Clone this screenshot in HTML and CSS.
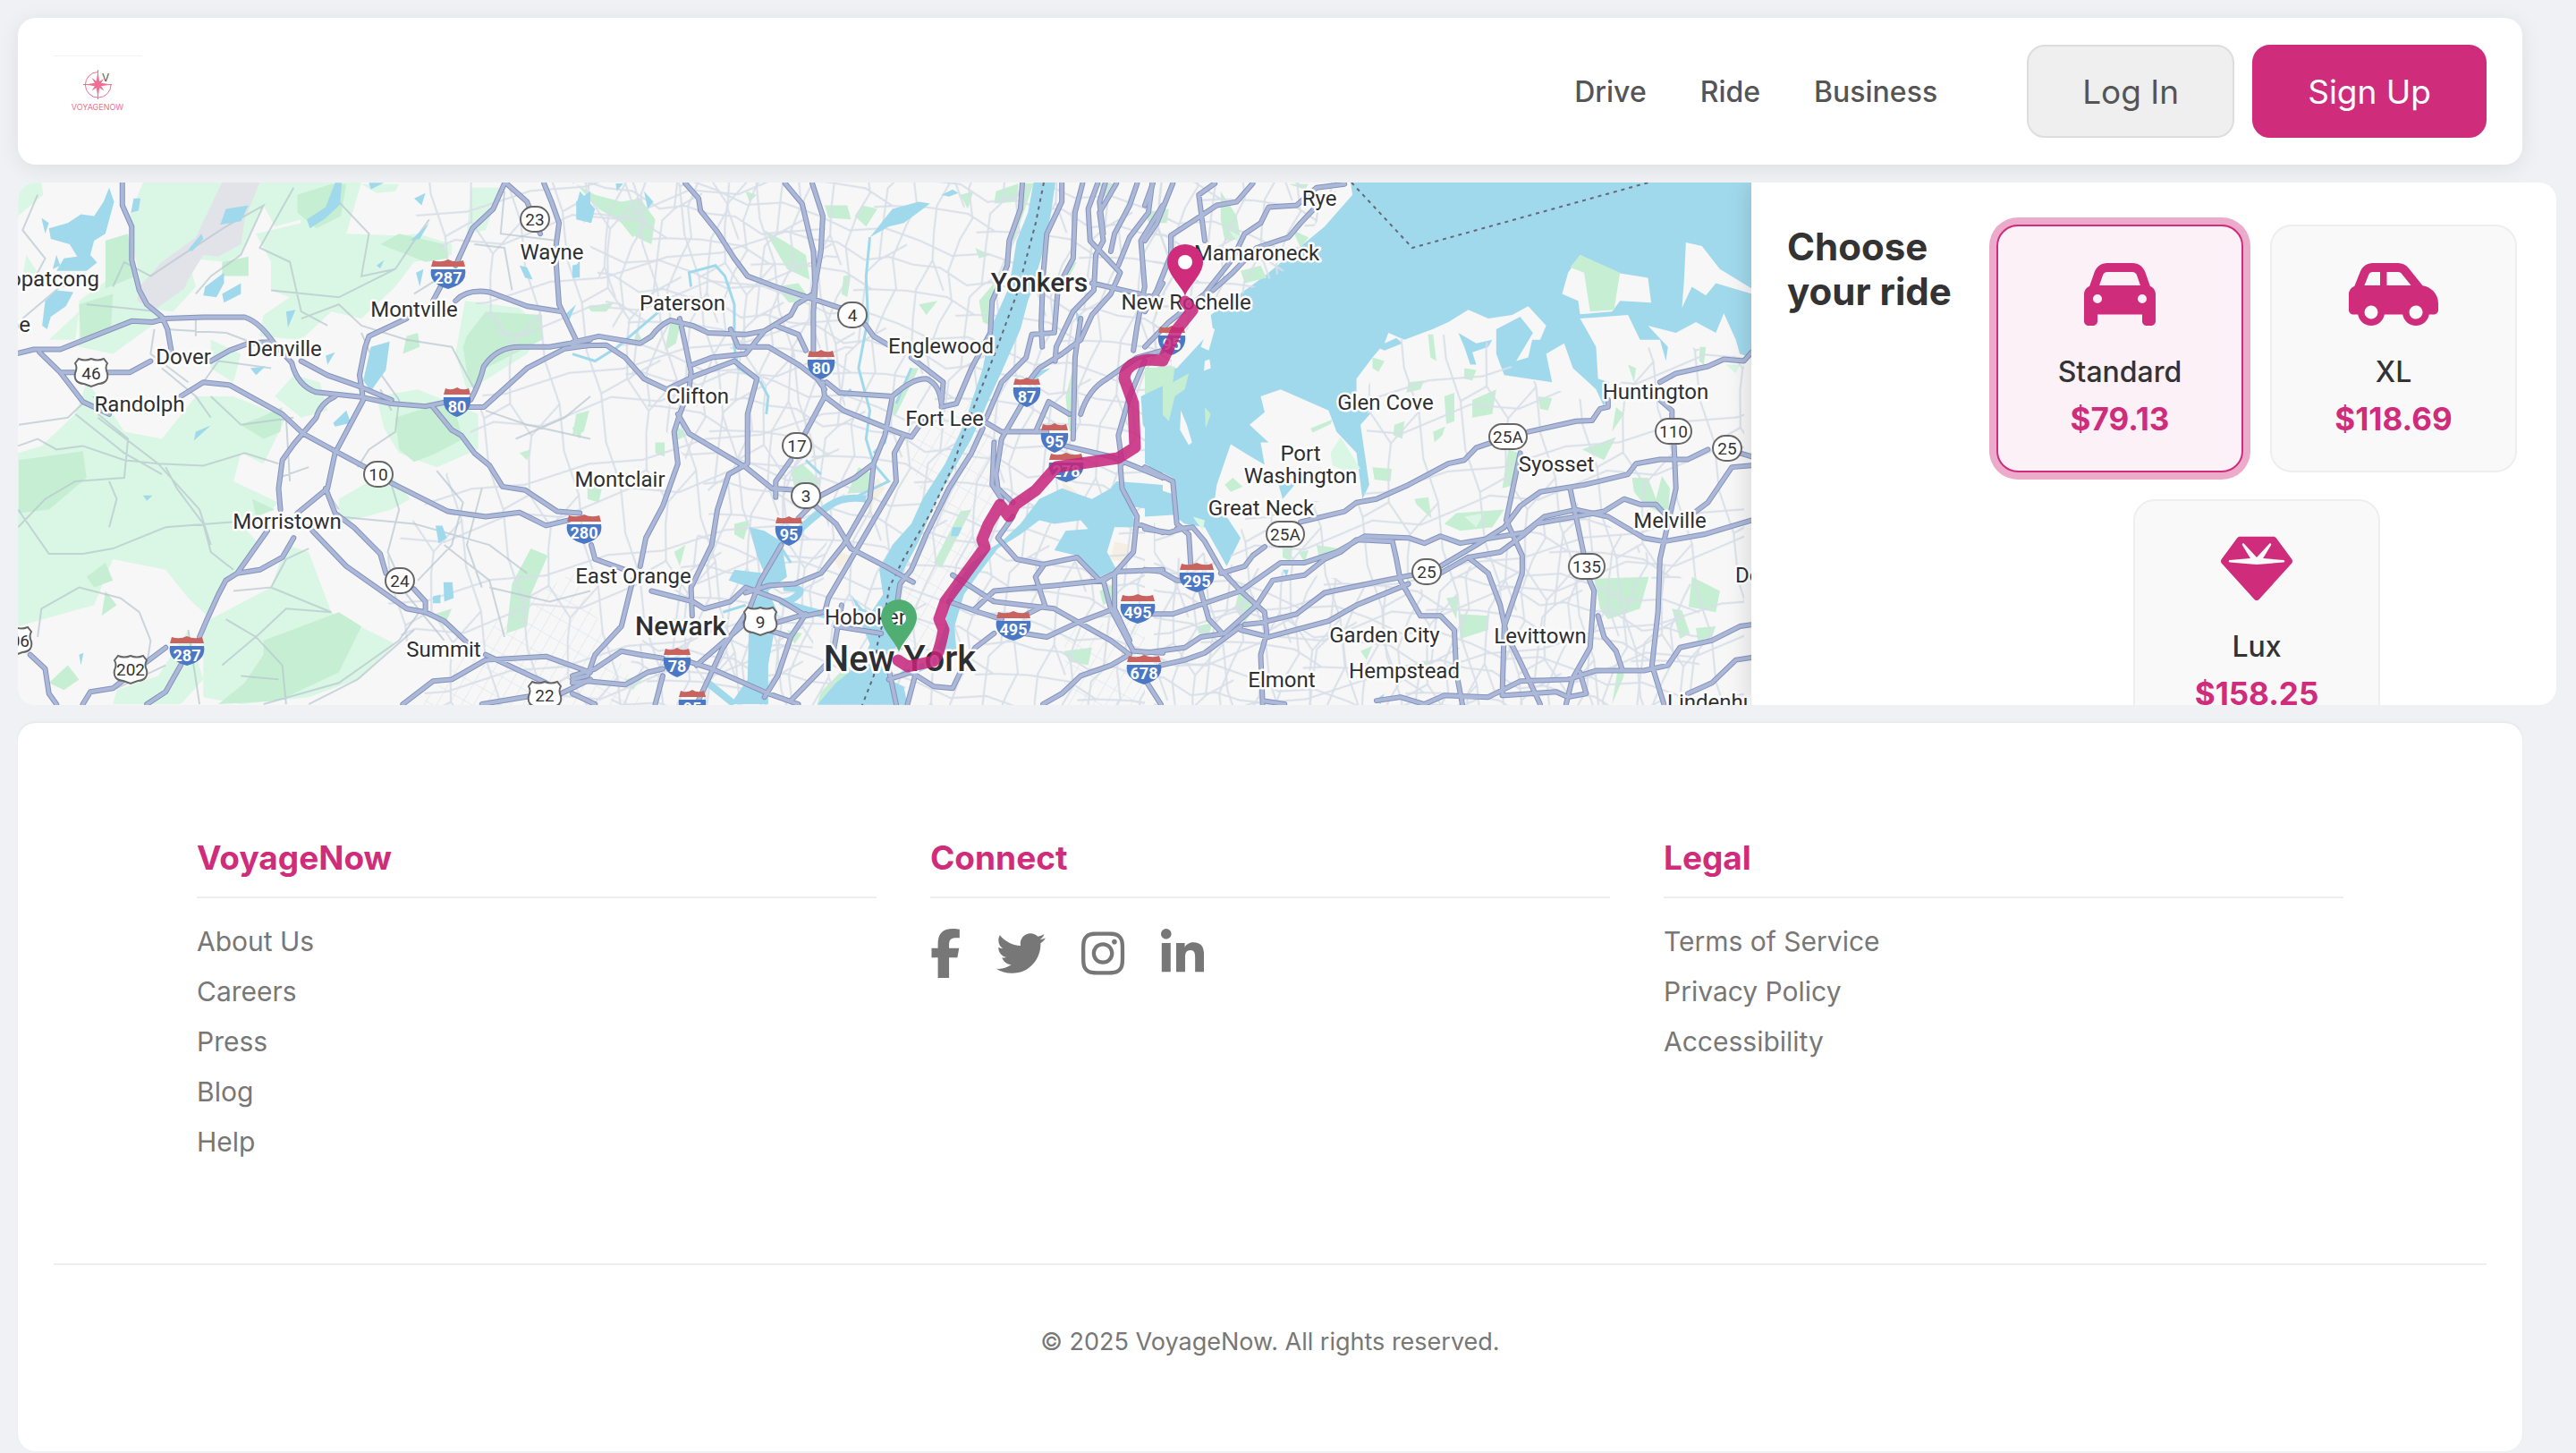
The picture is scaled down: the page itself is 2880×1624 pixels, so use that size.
FILE: index.html
```html
<!DOCTYPE html>
<html lang="en">
<head>
<meta charset="utf-8">
<title>VoyageNow</title>
<meta name="viewport" content="width=device-width, initial-scale=1">
<link rel="stylesheet" href="styles.css">
</head>
<body>
<header class="header">
  <a class="logo" href="#" aria-label="VoyageNow home">
    <svg class="logo-mark" viewBox="0 0 100 80" width="100" height="80">
      <path class="logo-rule" d="M0 .5H99"/>
      <g class="logo-lines">
        <path d="M49.500 18.500A14.300 14.300 0 1 0 64 32.500"/>
        <path d="M49.500 16V49M33 32.500H65"/>
      </g>
      <path class="logo-star" d="M49.500 17L51.200 30.500 64.500 32.500 51.500 34.500 49.500 47 47.500 34.500 35 32.500 47.500 30.500ZM42.500 25L49.500 30 56 26 52 32.500 56.500 39.500 49.500 35 42.500 39.500 47 32.500Z"/>
      <text class="logo-v" x="54" y="29">V</text>
      <text class="logo-name" x="49" y="61">VOYAGENOW</text>
    </svg>
  </a>
  <nav class="nav">
    <a class="nav-link" href="#">Drive</a>
    <a class="nav-link" href="#">Ride</a>
    <a class="nav-link" href="#">Business</a>
  </nav>
  <div class="actions">
    <button class="btn btn-plain" type="button">Log In</button>
    <button class="btn btn-primary" type="button">Sign Up</button>
  </div>
</header>

<main class="booking">
  <div class="map">
    <svg class="map-svg" viewBox="20 204 1938 584" preserveAspectRatio="xMinYMin slice" role="img" aria-label="Route from New York to New Rochelle">
      <defs>
        <pattern id="mesh" width="118" height="96" patternUnits="userSpaceOnUse" patternTransform="rotate(14)">
          <path class="street" d="M0 12L40 20 78 8 118 12M0 40L30 36 64 48 90 38 118 40M0 70L46 66 80 78 118 70M14 0L20 30 10 66 14 96M44 0L40 38 52 70 44 96M74 0L80 44 70 60 74 96M100 0L94 38 106 70 100 96M20 30L40 60M80 44L106 20M60 84L80 78"/>
        </pattern>
        <pattern id="mesh2" width="134" height="104" patternUnits="userSpaceOnUse" patternTransform="rotate(-12)">
          <path class="street" d="M0 20L60 28 134 20M0 64L40 56 92 72 134 64M24 0L30 50 24 104M70 0L62 40 78 80 70 104M110 0L116 52 110 104M30 50L62 40M78 80L116 52"/>
        </pattern>
        <pattern id="grid" width="12" height="22" patternUnits="userSpaceOnUse" patternTransform="rotate(30)">
          <path class="street thin" d="M0 0V22M0 0H12"/>
        </pattern>
        <path id="island" d="M0 980L70 975 100 1000 150 1010 205 1120 240 1040 175 930 180 890 215 775 250 800 325 850 345 930 375 890 300 835 290 770 310 770 262 720 300 685 290 640 340 620 400 650 460 680 480 740 530 800 545 930 562 890 540 720 572 680 530 640 530 590 570 530 600 490 610 460 650 480 720 450 760 430 810 395 860 420 920 410 960 385 1005 440 990 480 970 480 960 530 930 540 972 460 940 415 880 450 880 520 900 580 960 590 1020 600 1005 520 1050 490 1072 560 1130 620 1150 670 1162 600 1135 590 1130 500 1090 420 1210 410 1240 480 1290 480 1305 540 1310 500 1260 440 1330 460 1380 430 1430 460 1450 405 1480 480 1490 520 1520 530V1515H0Z"/>
        <symbol id="i2" viewBox="0 0 32 34"><path class="i-blue" d="M1 11H31Q33 27 16 33 -1 27 1 11Z"/><path class="i-red" d="M3 1Q10 4 16 0 22 4 29 1L31 8H1Z"/></symbol>
        <symbol id="i3" viewBox="0 0 40 34"><path class="i-blue" d="M1 11H39Q42 27 20 33 -2 27 1 11Z"/><path class="i-red" d="M3 1Q12 4 20 0 28 4 37 1L39 8H1Z"/></symbol>
        <symbol id="us" viewBox="0 0 44 36"><path class="badge" d="M8 3Q15 6 22 3 29 6 36 3L40 8Q37 13 40 19 42 30 30 31L22 34 14 31Q2 30 4 19 7 13 4 8Z"/></symbol>
        <g id="roads">
          <g transform="translate(0 190) scale(.4209 .3954)">
            <path class="vs" d="M48 518L90 507H160L350 427 405 430 440 420 540 416H650Q690 430 728 490L775 545Q790 610 840 628L960 642 1040 660 1130 668 1190 655 1250 650Q1275 600 1285 555 1320 500 1380 500H1460L1568 480M325 35V100L350 160V255L370 340 390 380 430 415 445 450 455 510M105 515L160 572 220 655 290 690M160 572H345L400 540M560 540L610 510 660 490 720 485M480 640L540 600 610 608 750 690 805 745 900 800 970 840M1040 885L1190 965 1290 980 1380 968 1450 1005 1510 990M1340 38L1310 110 1255 165 1210 270M1170 330L1150 370M1080 420L980 470 970 500 955 580 965 650 890 800 870 900 790 970M780 1040L750 1095 690 1130 630 1140 600 1160 580 1200 550 1270 530 1320M480 1400L440 1475 390 1510M1345 38L1400 90 1435 180M1445 38L1465 90 1485 150 1475 230 1485 380 1530 480M1210 370Q1240 335 1300 345L1400 385 1490 400M865 900L890 970 940 1010 1010 1085 1025 1140M1100 1185L1130 1220V1250L1180 1275 1240 1335M890 640Q850 660 840 700L780 775 750 820 740 900 745 960M710 1020L630 1140M830 1020L920 1120 1080 1240 1130 1250M1150 670L1200 735 1225 750 1260 800 1300 835 1335 895 1395 905 1480 965 1540 970M1190 670H1285L1400 560 1500 505 1568 495M1070 1510L1150 1445 1200 1440 1290 1385 1450 1375 1568 1420M1280 1510L1420 1485M1490 1480L1568 1440M1290 1370L1450 1450M80 1370L120 1410 130 1480 150 1510M220 1510L240 1475 300 1465 330 1440M390 1390L440 1350M800 540L870 580 950 610 1040 650"/>
          </g>
          <g transform="translate(640 190) scale(.4209 .3954)">
            <path class="vs" d="M300 38L335 80 340 115 385 175 430 250 465 300 540 330 640 365 740 400 780 440 800 470 840 495M900 530L985 600 980 660M565 38L610 95 640 230 645 330 640 400V510M637 38L665 130 660 230 640 350 595 380 580 410 510 455 460 465 360 460 320 440 260 425Q230 440 210 470L180 490 70 470 0 487M510 455L460 520 370 530 320 550M0 497L90 495 140 530 190 590 250 620 330 580 430 540M420 450L440 500 520 500 600 550 650 590 670 620M540 440L600 465 620 510M285 420L315 570 310 620 285 690 270 740 280 830 240 950 195 1040 180 1120M430 540L490 590 465 690V830L415 860 385 960 370 1060 315 1180 318 1260M280 690L310 745 460 840 530 900 590 905M670 640L615 750M580 820L540 880V925M675 600L710 630 850 640Q900 590 940 590 975 605 980 660M665 600L670 640 720 680 860 740 900 755 930 710M850 640L830 750 800 830 750 870 660 920 600 985M800 830L790 930 720 1060 660 1140 590 1170 520 1175 460 1195M880 750L855 800 860 880 800 990 740 1100 680 1210 670 1250M640 945L700 1000 740 1070 830 1120 905 1165M555 1060L500 1160 470 1240 400 1350 330 1510M50 1060L60 1100 140 1130M210 1190L320 1220 350 1240 420 1220 460 1180 550 1215 620 1260 665 1250M160 1160L130 1290 60 1370 40 1430 0 1440M0 1430L60 1410 130 1360 180 1370 240 1380M310 1390L370 1410 520 1480 600 1510M0 1450L40 1445 140 1455 200 1420 240 1410M460 1280L330 1400M540 1280L620 1255M520 1300L580 1320 620 1255M580 1320L545 1430 510 1490M0 1480L60 1510M240 1430L220 1510M715 1230L690 1380 580 1500M700 1290L820 1310M1195 38L1190 110 1160 200 1155 270 1115 370 1110 460 1060 560 1020 660 980 670M1300 38V90L1260 180 1250 300 1245 440 1248 500M1355 38L1335 120 1330 250 1290 330 1280 460 1220 465 1205 530 1140 600 1100 700M1395 38L1370 110 1375 200 1455 290 1430 350 1380 410 1350 480 1300 520 1240 560 1210 600M1445 38L1400 120 1410 200 1390 240 1385 340 1330 400 1285 500 1282 540M1500 38L1480 100 1440 180 1430 230M1415 38L1400 90 1410 180M1380 320L1568 365M1568 100L1510 200 1520 330 1500 440 1490 510M1540 38L1530 120 1480 190 1450 270M1100 715L1140 740 1260 740M1310 780L1430 810 1568 870M1200 650L1140 760 1125 860 1130 900 1170 940M1120 770L1115 890 1140 930M1330 760L1335 530 1350 420M1350 690Q1370 620 1420 590L1500 530 1568 510M1230 740L1265 655 1320 690M1090 730L1060 800 1000 900 940 1030 900 1130 870 1170 860 1240M1460 830L1450 750 1480 640 1520 540M1455 830L1460 900 1500 980 1490 1080 1440 1140 1400 1160 1340 1095 1250 1115 1180 1100 1130 1040 1170 980M1500 1000L1568 1025M1010 1145L1120 1220 1280 1240 1430 1330 1480 1370M1070 1240L1120 1190 1280 1175 1410 1160 1450 1135 1568 1130M1250 1120L1230 1150 1255 1230 1200 1260M1410 1160L1430 1240 1490 1360 1568 1365M1440 1140V1240L1480 1330M1440 1240L1340 1280 1260 1320 1200 1310M1000 1220L1080 1250 1140 1270M1480 1370L1430 1400 1350 1430 1300 1480 1250 1510M840 1440L900 1420 960 1460 1010 1465 1030 1420 1070 1350 1120 1310M840 1410L860 1510M890 1510L910 1430"/>
          </g>
          <g transform="translate(1280 190) scale(.4464 .3954)">
            <path class="vs" d="M390 995L500 965 530 940 580 930 660 890 760 830 800 820 830 785 870 770M960 740L1080 710 1120 708 1140 675 1160 670V650M1290 600L1330 575 1410 555 1450 535 1500 540 1520 515M300 1065L270 1090 250 1120 190 1140M1290 650L1320 680V700M1325 770L1330 900 1290 1100 1285 1250 1270 1400 1300 1510M740 1120L830 1060 900 1010 940 950 990 910 1100 890 1210 860 1230 830 1290 818H1360L1410 790M1490 800L1520 810M670 1145L600 1160 450 1195 380 1255 290 1280 250 1285M0 1255H70L240 1190 340 1110 400 1110 480 1080 550 1035 660 1040 700 1055 740 1035 790 1055 950 1025 1000 980 1080 960 1160 980 1250 1040 1300 1050 1400 1030 1520 990M0 1365L100 1350 140 1320 200 1310 280 1230 320 1160 400 1145 450 1100 490 1080 530 1045 620 1050 630 1100 640 1160 660 1200 690 1260 740 1260 775 1300 780 1420 795 1510M740 1140L810 1095 890 1080 950 1030 980 1000 1150 965 1200 930 1240 945 1280 945 1300 970M1380 965L1410 940 1440 890 1470 840 1520 835M905 990L940 800M905 990L945 1090V1140L900 1290 895 1485M810 1095L860 1140 890 1230 905 1310 940 1390 990 1510M1065 900L1100 1090M1110 1150L1125 1190 1115 1350 1070 1440 1055 1510M1135 1260L1150 1320 1180 1360 1195 1410M580 1500L640 1490 700 1510 750 1485 860 1490 940 1445 1060 1440 1130 1415 1250 1415 1310 1400 1340 1350 1420 1330 1490 1290 1520 1285M900 1485L1030 1475 1060 1490 1105 1480 1090 1420M1360 1480L1420 1450 1480 1385 1520 1378M0 840L70 880 80 1000 110 1030 115 1120M140 1190L160 1270 190 1305M80 1015L120 1010 150 1050 190 1130 240 1190 300 1250 305 1310 290 1370 295 1510M0 1130L40 1135 80 1160H120M0 1015L60 1025 90 1015M240 1300L310 1320 460 1275 530 1230 660 1170M40 1400L100 1385 150 1365 240 1290M295 1500L350 1510M175 38L135 70 150 200M270 38L230 90 180 100 120 145 65 185V240L30 340 0 400M500 40L430 50 380 100 310 105 290 150 250 180 220 250 150 350 60 430 0 500M440 90L390 150 360 190 280 220 220 290 170 340M20 38L0 100M70 38L30 150 0 200M45 320L30 350M0 1440L40 1510"/>
          </g>
        </g>
      </defs>

      <rect class="land" x="20" y="204" width="1938" height="584"/>

      <!-- parks: New Jersey -->
      <g transform="translate(0 190) scale(.4209 .3954)">
        <path class="park" d="M48 35H110L115 70 48 130ZM380 35H780L800 140 730 160 700 100 640 240 600 260 500 250 520 330 460 400 380 390 370 300 350 200 340 140ZM780 35H960L920 180 1060 185 1110 180 1200 210 1200 240 1100 260 1050 330 960 420 880 400 800 480 690 470 700 410 770 360 720 340 720 260 680 180 800 150ZM210 370L300 300 340 200 360 330 390 390 430 420 300 520 210 500ZM1235 370L1380 390 1440 450 1400 520 1280 600 1240 620 1210 520ZM900 930L1030 850 1090 930 1040 960 900 1000ZM1250 50H1330L1290 170 1240 180ZM48 800L110 780 200 690 230 600 300 690 330 740 430 760 520 640 620 640 760 700 700 830 640 800 620 880 740 940 720 960 640 1000 690 1060 640 1140 590 1170 550 1260 500 1210 440 1130 300 1100 250 1230 48 1290ZM540 1280L720 1180 760 1060 820 1080 880 1250 1050 1340 950 1440 820 1490 640 1510 540 1490ZM100 290L60 300 70 240ZM1000 640L1110 620 1270 690 1270 790 1160 840 1060 800 1020 730ZM130 480L210 400 200 480ZM420 1430L500 1300 540 1440 480 1510H300L310 1470ZM560 480L640 520 620 600 560 560ZM780 580L850 600 870 680 800 700 730 640ZM960 40H1060L1050 60 1000 65Z"/>
        <path class="park-deep" d="M790 70L880 40H920L905 130 840 165 790 120ZM280 200L340 180 360 300 280 335ZM210 380L300 350 295 440 215 490ZM1240 470L1290 400 1440 410V480L1290 560 1260 620 1240 570 1230 500ZM1050 700L1200 650 1230 760 1160 800 1100 825 1060 790ZM1360 1170L1410 1070 1455 1090 1410 1200 1400 1290 1345 1310ZM700 1330L900 1250 960 1290 900 1420 740 1500 580 1510 650 1450 700 1370ZM50 820L220 795 230 870 130 960 50 970ZM690 700L750 670 745 740 700 760 640 720ZM590 260L660 245 660 300 590 300ZM670 930L730 960 680 980ZM1010 210L1060 180 1180 210 1190 250 1130 260ZM230 1150L280 1110 300 1160 250 1180ZM130 1450L180 1400 210 1440 170 1470ZM1080 470L1110 460 1115 500 1070 520ZM1520 730L1560 680 1540 760ZM280 1190L310 1230 270 1260ZM1380 800L1410 790 1400 820ZM1140 1260L1200 1240 1180 1290Z"/>
        <path class="airfield" d="M590 35H690L650 140 640 210 580 245 540 240 500 310 490 335 410 395 365 370 370 330 430 260 520 190Z"/>
      </g>

      <!-- parks: Bergen, Hudson and the city -->
      <g transform="translate(640 190) scale(.4209 .3954)">
        <path class="park-deep" d="M10 40L60 70 130 90 180 80 220 140 210 210 170 190 130 150 70 110ZM510 170L560 200 620 240 630 310 570 280ZM540 330L600 320 635 370 575 375ZM670 100H730L740 140 680 135ZM770 100L810 110 780 160 750 130ZM260 430L290 420 275 490 245 510ZM580 850L610 830 660 880 640 910 590 900ZM760 840L800 860 790 910 730 915ZM1160 200L1200 38H1225L1170 210ZM1080 370L1120 320 1110 440 1090 430ZM1030 965L1060 960 980 1125 960 1110ZM900 560H920L860 690H840ZM275 720L305 750 275 765ZM430 1000L470 990 455 1045 430 1030ZM660 1475L730 1400 760 1430 710 1510H650ZM720 300L740 295 730 360 715 350ZM40 385L110 375 90 400 50 400ZM920 380L970 370 940 410ZM1125 60L1185 38 1180 90 1120 95ZM1520 590L1568 545V640L1540 660ZM1330 560L1335 730 1320 740 1310 640ZM1400 1190L1440 1170V1210L1410 1230ZM1305 1360L1380 1350 1370 1400 1320 1390ZM10 690L45 680 30 740 0 750ZM40 890L80 890 70 940 40 930ZM270 1080L300 1060 285 1120ZM1310 270L1340 260 1310 320ZM1070 220L1110 240 1080 250ZM1400 38H1440L1410 80ZM130 150L190 160 160 190ZM140 1440L200 1420 160 1470ZM570 1300L610 1310 590 1340ZM460 60L490 70 470 90ZM1030 70L1065 60 1050 110ZM220 770L245 770V810L220 800ZM170 450L190 490 165 480Z"/>
        <path class="sand" d="M810 870L830 900 800 940 790 990 780 920ZM710 1080L740 1090 710 1130 695 1100ZM1300 880L1340 910 1330 950 1310 930ZM1440 1050L1480 1060 1470 1110 1430 1100Z"/>
      </g>

      <path class="mesh2" d="M440 204H900L960 340 900 788H480L420 640 520 500 560 380Z"/>
      <path class="mesh" d="M640 204H1310V788H680L800 560 700 420Z"/>
      <path class="grid" d="M1015 500L1100 420 1128 500 1110 580 1060 660 1050 720 1010 740 1000 670 1040 590Z"/>
      <path class="grid" d="M470 788L560 690 640 640 720 788ZM1190 700L1330 690 1390 788H1190Z"/>

      <g class="lanes" transform="translate(0 190) scale(.4209 .3954)">
        <path class="vs" d="M48 780L100 760 150 790 220 780 330 820 420 830 540 836 650 800 740 830M48 1010L120 930 200 880 330 870 340 760 260 690M48 960L130 1085H220L300 1070 440 1010 620 995M100 1320L110 1240 210 1180 320 1210 370 1250 400 1330 390 1400M300 1470L440 1400M50 720L180 700 220 660M260 700L420 830 530 960 560 1060M440 840L470 900 540 1000 560 1080 620 1130M100 70L60 170 120 250 80 330M230 380L330 390 420 400M300 330L330 260 400 300 470 250 600 160 700 100 640 240 560 300 520 350M780 50L690 220 770 260 800 400 870 440M800 420L900 380 960 440 1080 480 1200 500 1260 620M720 340L900 360 1050 280 1100 200 1140 140M900 90L980 180 960 300 1050 280M620 1190L720 1180 880 1250 760 1240 690 1310 590 1400M720 1180L760 1100 820 1070M600 1270L680 1320 750 1400 760 1510M640 1430L740 1440M500 1300L530 1510M960 460L1000 560 1060 650 1050 740 980 790 950 840M780 700L640 720 560 640M540 600L580 540 720 560M410 450L400 520 500 600M440 450L600 460 700 500M1040 890L1060 960 1030 1080 1080 1200 1180 1330M900 980L1100 1000 1300 1060 1400 1140M1280 900L1240 1060 1280 1180M1160 850L1230 940 1200 1060 1110 1160M1010 620L1040 680M870 910L900 960M200 690L330 800 430 860M60 420L160 330 250 310M520 420L520 470M430 560L520 640 560 700M760 700L770 880M820 840L740 870M290 880L310 930 290 1010M1160 310L1100 350M1260 210L1340 220 1360 340M1340 60L1330 180 1480 200M1370 760L1500 700 1568 640M1290 680L1400 720 1568 760M1300 1180L1460 1220 1568 1190M1180 1060L1300 1160 1340 1320M700 1510L900 1450 1060 1330 1120 1240M820 1510L950 1440 1100 1300"/>
      </g>

      <!-- Long Island Sound and its shores -->
      <g transform="translate(1280 190) scale(.4464 .3954)">
        <path class="water" d="M515 34H1522V700L1150 1120H0V560L80 560 170 450 165 410 300 300 450 160 520 70Z"/>
        <use href="#island" class="land"/>
        <path class="land" d="M1355 205L1395 215 1440 280 1520 335V350L1430 320 1405 355 1370 330 1345 390 1350 320ZM1090 240L1180 290 1260 305 1268 375 1190 370 1170 400 1090 408 1085 370 1045 350 1060 290ZM90 680L105 720 118 770 110 778 88 735ZM150 540L162 535 165 560 148 568ZM160 440L175 450 160 510 140 500ZM0 830L70 870 80 920 0 890Z"/>
        <path class="park-deep" d="M0 560L75 555 70 600 110 575 100 620 75 640 60 710 0 640ZM150 670L165 690 152 730ZM1090 240L1190 290 1175 395 1115 400 1100 290 1065 275ZM415 730L470 705 465 718 420 742ZM570 530L600 540 585 570 570 560ZM820 650L880 620 870 690 820 700ZM750 640L775 630V710L755 718ZM985 640L1020 645 1010 680 990 675ZM1095 790L1180 755 1150 820ZM750 1000L780 970 900 960 870 1010 790 1020ZM675 930L710 925 718 985 680 945ZM1220 870H1260L1280 930 1295 865 1315 900 1310 980 1250 945 1225 910ZM1125 1155L1262 1150 1240 1240 1160 1270 1140 1240ZM1370 1150L1440 1190 1430 1250 1362 1235ZM1380 1295L1430 1290 1420 1320 1385 1330ZM1320 1240L1345 1245 1365 1310 1340 1325ZM785 1255L860 1260V1300L790 1325ZM755 1210L785 1205 780 1270ZM1190 1370L1200 1430 1170 1510ZM190 60L230 130 240 195 200 200 190 140ZM370 170L410 190 390 220ZM0 120L60 110 55 150 10 150ZM240 1170L280 1230 250 1280 225 1240ZM240 285L290 270 305 305 250 320ZM709 465L722 465 730 540 715 530ZM200 890L220 870 245 895 215 910ZM570 840L618 845 615 880 575 875ZM345 1060L370 1070 365 1105 345 1095ZM385 1080L410 1075 400 1110ZM430 1060L485 1070 470 1100 435 1090ZM660 600L700 595 690 620 655 630ZM625 720L650 710 645 760 622 750ZM722 740L752 725 745 750 725 770ZM910 790L935 800 925 890 895 900ZM540 1360L570 1345 555 1385ZM650 1400L720 1390 700 1430ZM1390 500L1405 500 1400 550 1388 540ZM1180 670L1200 690 1170 740ZM130 1290L170 1280 160 1315 135 1310ZM360 40H410L400 55ZM800 560L830 565 820 595 800 590ZM1210 550L1230 560 1225 600Z"/>
        <path class="park" d="M465 800L490 755 540 845 500 850 470 835ZM800 980L850 970 830 1010ZM210 170L245 190 235 210ZM120 980L150 990 145 1020ZM1455 550H1490L1480 575Z"/>
        <path class="water" d="M785 460L830 490 870 480 860 500 820 515 830 550 815 550 800 500ZM580 500L630 475 645 490 600 510ZM345 1130H360L355 1150ZM575 1500L600 1480 590 1510Z"/>
      </g>
      <path class="mesh2" d="M1290 584L1371 633 1400 560 1500 560 1525 558 1530 430 1560 380 1650 370 1700 420 1790 455 1850 380 1950 400V788H1290Z"/>
      <path class="mesh" d="M1290 204H1500L1440 300 1350 350 1290 400ZM1290 620L1600 660 1760 560 1900 660V788H1290Z"/>

      <!-- rivers and lakes -->
      <g class="water" transform="translate(0 190) scale(.4209 .3954)">
        <path d="M290 50L303 90 280 180 250 200 240 240 258 262 230 285 150 285 170 250 205 245 185 210 135 195 130 165 180 150 215 125 250 130 275 90ZM355 80H373L368 115 348 120ZM120 370L150 340 195 345 175 385 135 415 125 450 112 440ZM600 110L660 100 640 145 585 155ZM890 36H908L903 98 863 138 823 165 815 140 865 105ZM545 330L595 290V320L575 360 540 355ZM590 350L640 320V350L595 375ZM985 500L1035 485 1025 565 985 625 965 595ZM885 715L920 680 932 715 890 725ZM520 740L560 722 515 765ZM1157 1005H1175L1187 1040 1165 1055ZM1178 1165L1202 1165 1205 1210 1180 1220ZM1150 1205L1170 1200V1225H1150ZM1530 90L1568 60V150L1535 130ZM500 225L535 180 540 195 510 230ZM1000 270L1020 255 1010 278ZM1380 270L1400 275 1415 310 1395 305ZM760 400L785 395 765 445ZM865 525L890 515 870 550ZM665 560L705 555 680 580ZM1105 290L1125 280 1115 330ZM380 920L405 920 390 935ZM210 1370L222 1365 215 1400ZM980 36H1020L985 55ZM1100 80L1130 65 1120 100ZM1500 410L1530 380 1510 430ZM1540 250L1520 300 1540 305ZM245 640L270 640 265 665ZM1090 200L1140 150 1115 195ZM120 180L110 135 130 150ZM150 240L140 280 160 270Z"/>
      </g>
      <g class="water" transform="translate(640 190) scale(.4209 .3954)">
        <path d="M1225 34H1283L1270 130 1245 250 1210 370 1190 450 1140 570 1110 640 1060 760 1000 870 960 950 920 1050 880 1130 865 1180 855 1240 870 1330 840 1380V1440L880 1460 890 1512H650L700 1450 770 1390 790 1340 770 1290 800 1240 825 1200 815 1130 850 1060 900 1000 930 930 990 830 1040 720 1090 560 1110 450 1160 330 1180 200 1210 120ZM1110 1070L1140 1050 1190 1000 1240 930 1300 900 1380 930 1430 900 1445 880 1568 890V965L1480 950 1500 1010 1440 1010 1420 1080 1445 1130 1400 1150 1340 1090 1280 1075 1310 1020 1370 1015 1350 990 1280 1000 1240 990 1190 1030 1130 1070 1080 1140 1040 1200 1015 1290 1020 1360 960 1400 900 1430 870 1420 960 1380 990 1290 1000 1200 1060 1110ZM1510 640L1568 610V880L1530 840 1540 760 1515 720ZM470 1010L510 1020 555 1050 570 1150 520 1190 545 1250 520 1400V1510H420L465 1440 470 1250 500 1190 415 1160 430 1130 510 1140 490 1090ZM790 190L850 110 920 90 950 95 880 150 840 160ZM980 70L1010 55 1025 65 1000 75ZM10 100L20 60 60 110 50 150 10 140ZM1010 1010L1035 1010 1025 1035 1005 1035ZM190 60L215 90 200 110ZM115 38H135L118 60ZM1335 390L1350 420 1340 430ZM0 270L18 265 12 305H0ZM1230 570L1270 560 1220 600ZM740 1200L770 1240 790 1250 760 1250Z"/>
        <path class="stream wide vs" d="M780 930Q720 920 680 950T600 1020M560 1180Q620 1180 600 1200T560 1220 680 1260M360 1450L430 1510"/>
        <path class="stream vs" d="M790 190L780 300 785 420 760 560 790 680 780 760 800 830 840 880 760 920M315 330L310 290 380 270 405 300 430 380V500L440 560 500 600 520 640 515 690M0 520L60 540 120 500 230 400M850 640L830 770 800 800M900 560L860 660M720 640L740 620M550 1060L580 1110M660 860L620 820M400 1250L460 1230"/>
      </g>

      <path class="border vs" d="M1167 204L1158 249 1137 328 1115 388 1078 483 1065 522 1040 574 1010 625 994 657 989 688 981 720 977 755 964 788M1511 204L1579 277 1843 204"/>

      <use href="#roads" class="casing"/>
      <use href="#roads" class="road"/>

      <!-- interstate shields -->
      <g class="i-num">
        <use href="#i3" x="481" y="290" width="40" height="34"/><text x="501" y="317">287</text>
        <use href="#i2" x="495" y="433" width="32" height="34"/><text x="511" y="461">80</text>
        <use href="#i3" x="633" y="575" width="40" height="34"/><text x="653" y="602">280</text>
        <use href="#i3" x="189" y="711" width="40" height="34"/><text x="209" y="739">287</text>
        <use href="#i2" x="902" y="391" width="32" height="34"/><text x="918" y="418">80</text>
        <use href="#i2" x="1132" y="422" width="32" height="34"/><text x="1148" y="450">87</text>
        <use href="#i2" x="1163" y="473" width="32" height="34"/><text x="1179" y="500">95</text>
        <use href="#i3" x="1172" y="506" width="40" height="34"/><text x="1192" y="533">278</text>
        <use href="#i2" x="866" y="577" width="32" height="34"/><text x="882" y="604">95</text>
        <use href="#i3" x="1113" y="683" width="40" height="34"/><text x="1133" y="710">495</text>
        <use href="#i3" x="1252" y="664" width="40" height="34"/><text x="1272" y="691">495</text>
        <use href="#i3" x="1259" y="732" width="40" height="34"/><text x="1279" y="759">678</text>
        <use href="#i2" x="741" y="724" width="32" height="34"/><text x="757" y="751">78</text>
        <use href="#i2" x="758" y="771" width="32" height="34"/><text x="774" y="798">95</text>
        <use href="#i2" x="1294" y="364" width="32" height="34"/><text x="1310" y="391">95</text>
        <use href="#i3" x="1318" y="629" width="40" height="34"/><text x="1338" y="656">295</text>
      </g>
      <!-- state and US route badges -->
      <g class="r-num">
        <rect class="badge" x="582" y="231" width="32" height="28" rx="14"/><text x="598" y="252">23</text>
        <rect class="badge" x="407" y="516" width="32" height="28" rx="14"/><text x="423" y="537">10</text>
        <rect class="badge" x="431" y="635" width="32" height="28" rx="14"/><text x="447" y="656">24</text>
        <rect class="badge" x="937" y="338" width="32" height="28" rx="14"/><text x="953" y="359">4</text>
        <rect class="badge" x="875" y="484" width="32" height="28" rx="14"/><text x="891" y="505">17</text>
        <rect class="badge" x="885" y="540" width="32" height="28" rx="14"/><text x="901" y="561">3</text>
        <rect class="badge" x="1665" y="474" width="42" height="28" rx="14"/><text x="1686" y="495">25A</text>
        <rect class="badge" x="1851" y="468" width="40" height="28" rx="14"/><text x="1871" y="489">110</text>
        <rect class="badge" x="1915" y="487" width="32" height="28" rx="14"/><text x="1931" y="508">25</text>
        <rect class="badge" x="1416" y="583" width="42" height="28" rx="14"/><text x="1437" y="604">25A</text>
        <rect class="badge" x="1579" y="625" width="32" height="28" rx="14"/><text x="1595" y="646">25</text>
        <rect class="badge" x="1754" y="619" width="40" height="28" rx="14"/><text x="1774" y="640">135</text>
        <use href="#us" x="80" y="398" width="44" height="36"/><text x="102" y="424">46</text>
        <use href="#us" x="124" y="730" width="44" height="36"/><text x="146" y="755">202</text>
        <use href="#us" x="587" y="759" width="44" height="36"/><text x="609" y="784">22</text>
        <use href="#us" x="828" y="676" width="44" height="36"/><text x="850" y="702">9</text>
        <use href="#us" x="-5" y="698" width="44" height="36"/><text x="17" y="723">206</text>
      </g>

      <g class="place">
        <text class="end" x="111" y="320">Hopatcong</text>
        <text class="end" x="34" y="371">Hope</text>
        <text x="617" y="290">Wayne</text>
        <text x="463" y="354">Montville</text>
        <text x="318" y="398">Denville</text>
        <text x="205" y="407">Dover</text>
        <text x="156" y="460">Randolph</text>
        <text x="321" y="591">Morristown</text>
        <text x="496" y="734">Summit</text>
        <text x="763" y="347">Paterson</text>
        <text x="780" y="451">Clifton</text>
        <text x="693" y="544">Montclair</text>
        <text x="708" y="652">East Orange</text>
        <text x="1052" y="395">Englewood</text>
        <text x="1056" y="476">Fort Lee</text>
        <text class="start" x="922" y="698">Hoboken</text>
        <text x="1326" y="346">New Rochelle</text>
        <text x="1405" y="291">Mamaroneck</text>
        <text x="1475" y="230">Rye</text>
        <text x="1549" y="458">Glen Cove</text>
        <text x="1454" y="515">Port</text>
        <text x="1454" y="540">Washington</text>
        <text x="1410" y="576">Great Neck</text>
        <text x="1740" y="527">Syosset</text>
        <text x="1851" y="446">Huntington</text>
        <text x="1867" y="590">Melville</text>
        <text class="start" x="1940" y="651">Deer Park</text>
        <text x="1548" y="718">Garden City</text>
        <text x="1722" y="719">Levittown</text>
        <text x="1570" y="758">Hempstead</text>
        <text x="1433" y="768">Elmont</text>
        <text class="start" x="1864" y="793">Lindenhurst</text>
        <text class="city" x="761" y="710">Newark</text>
        <text class="city" x="1162" y="326">Yonkers</text>
        <text class="metro" x="1006" y="750">New York</text>
      </g>

      <path class="route" d="M1004 738L1015 745 1044 739Q1050 730 1055 704L1050 692 1057 672 1101 612 1098 603 1105 586 1118 564 1128 577 1135 564 1158 548 1181 522 1250 512 1269 500 1267 451 1257 423Q1258 405 1284 402L1300 403 1316 368 1333 347 1325 337"/>
      <path class="pin pin-from" fill-rule="evenodd" d="M1005 729C1003 719 985 704 985 690A20 20 0 0 1 1025 690C1025 704 1007 719 1005 729ZM997 691A8 8 0 0 0 1013 691 8 8 0 0 0 997 691Z"/>
      <path class="pin pin-to" fill-rule="evenodd" d="M1325 331C1323 322 1305 307 1305 293A20 20 0 0 1 1345 293C1345 307 1327 322 1325 331Z"/>
      <circle class="pin-eye" cx="1325" cy="293" r="8"/>
    </svg>
  </div>

  <section class="rides">
    <h2 class="rides-title">Choose your ride</h2>
    <div class="ride-list">
      <button class="ride is-selected" type="button">
        <svg class="ride-icon" viewBox="0 0 512 512" width="80" height="80"><path d="M135.200 117.400L109.100 192H402.900l-26.100-74.600C372.300 104.600 360.200 96 346.600 96H165.400c-13.600 0-25.700 8.600-30.200 21.400zM39.600 196.800L74.800 96.300C88.300 57.800 124.600 32 165.400 32H346.600c40.800 0 77.100 25.800 90.600 64.300l35.200 100.500c23.200 9.600 39.600 32.500 39.600 59.200V400v48c0 17.700-14.300 32-32 32H448c-17.700 0-32-14.300-32-32V400H96v48c0 17.700-14.300 32-32 32H32c-17.700 0-32-14.300-32-32V400 256c0-26.700 16.400-49.600 39.600-59.200zM128 288a32 32 0 1 0 -64 0 32 32 0 1 0 64 0zm288 32a32 32 0 1 0 0-64 32 32 0 1 0 0 64z"/></svg>
        <span class="ride-name">Standard</span>
        <span class="ride-price">$79.13</span>
      </button>
      <button class="ride" type="button">
        <svg class="ride-icon" viewBox="0 0 640 512" width="100" height="80"><path d="M171.300 96H224v96H111.300l30.400-75.900C146.500 104 158.200 96 171.300 96zM272 192V96h81.200c9.700 0 18.900 4.400 25 12l67 84H272zm256.200 1L428.200 68c-18.200-22.800-45.800-36-75-36H171.300c-39.300 0-74.600 23.900-89.100 60.300L40.600 196.400C16.800 205.800 0 228.900 0 256V368c0 17.700 14.300 32 32 32H65.300c7.600 45.400 47.100 80 94.700 80s87.100-34.600 94.700-80H385.300c7.600 45.400 47.100 80 94.700 80s87.100-34.600 94.700-80H608c17.700 0 32-14.300 32-32V320c0-65.200-48.800-119-111.800-127zM434.700 368a48 48 0 1 1 90.500 32 48 48 0 1 1 -90.500-32zM160 336a48 48 0 1 1 0 96 48 48 0 1 1 0-96z"/></svg>
        <span class="ride-name">XL</span>
        <span class="ride-price">$118.69</span>
      </button>
      <button class="ride" type="button">
        <svg class="ride-icon" viewBox="0 0 512 512" width="80" height="80"><path d="M116.700 33.800c4.500-6.100 11.700-9.800 19.300-9.800H376c7.600 0 14.800 3.600 19.300 9.800l112 152c6.800 9.200 6.100 21.900-1.500 30.400l-232 256c-4.500 5-11 7.900-17.800 7.900s-13.200-2.900-17.800-7.900l-232-256c-7.700-8.500-8.300-21.200-1.500-30.400l112-152zm38.500 39.800c-3.300 2.500-4.200 7-2.100 10.500l57.400 95.600L63.300 192c-4.100 .3-7.300 3.800-7.300 8s3.200 7.600 7.300 8l192 16c.4 0 .9 0 1.300 0l192-16c4.100-.3 7.300-3.800 7.300-8s-3.200-7.600-7.300-8L301.500 179.800l57.400-95.600c2.100-3.500 1.200-8.100-2.100-10.500s-7.900-2-10.700 1L256 172.800 165.900 74.600c-2.800-3-7.400-3.400-10.700-1z"/></svg>
        <span class="ride-name">Lux</span>
        <span class="ride-price">$158.25</span>
      </button>
    </div>
  </section>
</main>

<footer class="footer">
  <div class="footer-cols">
    <section class="footer-col">
      <h3 class="footer-title">VoyageNow</h3>
      <ul class="footer-list">
        <li><a class="footer-link" href="#">About Us</a></li>
        <li><a class="footer-link" href="#">Careers</a></li>
        <li><a class="footer-link" href="#">Press</a></li>
        <li><a class="footer-link" href="#">Blog</a></li>
        <li><a class="footer-link" href="#">Help</a></li>
      </ul>
    </section>
    <section class="footer-col">
      <h3 class="footer-title">Connect</h3>
      <div class="social">
        <a href="#" aria-label="Facebook"><svg viewBox="0 0 320 512" height="55"><path d="M80 299.300V512H196V299.300h86.500l18-97.800H196V166.900c0-51.700 20.300-71.500 72.700-71.500c16.300 0 29.400 .4 37 1.200V7.900C291.400 4 256.400 0 236.200 0C129.300 0 80 50.500 80 159.400v42.100H14v97.800H80z"/></svg></a>
        <a href="#" aria-label="Twitter"><svg viewBox="0 0 512 512" height="55"><path d="M459.370 151.716c.325 4.548.325 9.097.325 13.645 0 138.720-105.583 298.558-298.558 298.558-59.452 0-114.680-17.219-161.137-47.106 8.447.974 16.568 1.299 25.340 1.299 49.055 0 94.213-16.568 130.274-44.832-46.132-.975-84.792-31.188-98.112-72.772 6.498.974 12.995 1.624 19.818 1.624 9.421 0 18.843-1.300 27.614-3.573-48.081-9.747-84.143-51.980-84.143-102.985v-1.299c13.969 7.797 30.214 12.670 47.431 13.319-28.264-18.843-46.781-51.005-46.781-87.391 0-19.492 5.197-37.360 14.294-52.954 51.655 63.675 129.300 105.258 216.365 109.807-1.624-7.797-2.599-15.918-2.599-24.040 0-57.828 46.782-104.934 104.934-104.934 30.213 0 57.502 12.670 76.670 33.137 23.715-4.548 46.456-13.320 66.599-25.340-7.798 24.366-24.366 44.833-46.132 57.827 21.117-2.273 41.584-8.122 60.426-16.243-14.292 20.791-32.161 39.308-52.628 54.253z"/></svg></a>
        <a href="#" aria-label="Instagram"><svg viewBox="0 0 448 512" height="55"><path d="M224.100 141c-63.600 0-114.900 51.300-114.900 114.900s51.300 114.900 114.900 114.900S339 319.500 339 255.900 287.700 141 224.100 141zm0 189.600c-41.100 0-74.700-33.500-74.700-74.700s33.500-74.700 74.700-74.700 74.700 33.500 74.700 74.700-33.600 74.700-74.700 74.700zm146.400-194.300c0 14.900-12 26.800-26.800 26.800-14.900 0-26.800-12-26.800-26.800s12-26.800 26.800-26.800 26.800 12 26.800 26.800zm76.100 27.200c-1.700-35.900-9.900-67.700-36.200-93.900-26.200-26.200-58-34.400-93.900-36.200-37-2.100-147.900-2.100-184.900 0-35.800 1.700-67.600 9.900-93.900 36.100s-34.400 58-36.200 93.900c-2.100 37-2.100 147.900 0 184.900 1.700 35.900 9.900 67.700 36.200 93.900s58 34.400 93.900 36.200c37 2.100 147.900 2.100 184.900 0 35.900-1.700 67.700-9.900 93.900-36.200 26.200-26.200 34.400-58 36.200-93.900 2.100-37 2.100-147.800 0-184.800zM398.800 388c-7.800 19.600-22.900 34.700-42.600 42.600-29.500 11.700-99.500 9-132.100 9s-102.700 2.600-132.100-9c-19.600-7.800-34.700-22.900-42.600-42.600-11.700-29.500-9-99.500-9-132.100s-2.600-102.700 9-132.100c7.800-19.600 22.900-34.700 42.600-42.600 29.500-11.700 99.500-9 132.100-9s102.700-2.600 132.100 9c19.600 7.800 34.700 22.900 42.600 42.600 11.700 29.500 9 99.500 9 132.100s2.700 102.700-9 132.100z"/></svg></a>
        <a href="#" aria-label="LinkedIn"><svg viewBox="0 0 448 512" height="55"><path d="M100.280 448H7.400V148.900h92.880zM53.790 108.100C24.090 108.100 0 83.500 0 53.800a53.790 53.790 0 0 1 107.580 0c0 29.700-24.100 54.300-53.790 54.300zM447.900 448h-92.680V302.400c0-34.700-.7-79.200-48.290-79.200-48.290 0-55.690 37.700-55.690 76.700V448h-92.780V148.900h89.080v40.800h1.300c12.400-23.500 42.690-48.300 87.880-48.300 94 0 111.280 61.900 111.280 142.300V448z"/></svg></a>
      </div>
    </section>
    <section class="footer-col">
      <h3 class="footer-title">Legal</h3>
      <ul class="footer-list">
        <li><a class="footer-link" href="#">Terms of Service</a></li>
        <li><a class="footer-link" href="#">Privacy Policy</a></li>
        <li><a class="footer-link" href="#">Accessibility</a></li>
      </ul>
    </section>
  </div>
  <p class="copyright">© 2025 VoyageNow. All rights reserved.</p>
</footer>
</body>
</html>
```
FILE: styles.css
```css
:root {
  --pink: #cf2c7c;
  --page: #f0f1f5;
  --line: #eeeeee;
}

* { box-sizing: border-box; }

body {
  margin: 0;
  padding: 20px 22px 0 20px;
  display: flex;
  flex-direction: column;
  gap: 20px;
  background: var(--page);
  color: #333;
  font-family: Inter, "Liberation Sans", sans-serif;
}

a { color: inherit; text-decoration: none; }
h2, h3, p, ul { margin: 0; padding: 0; }
ul { list-style: none; }

/* header */
.header {
  display: flex;
  align-items: center;
  margin-right: 38px;
  padding: 30px 40px;
  background: #fff;
  border-radius: 20px;
  box-shadow: 0 4px 24px rgba(0, 0, 0, .08);
}
.logo { display: block; margin-right: auto; }
.logo-mark { display: block; }
.logo-rule { stroke: #f2f2f2; fill: none; }
.logo-lines { stroke: #ee6f93; fill: none; }
.logo-star { fill: #ee6f93; }
.logo-v { font-size: 12px; fill: #555; }
.logo-name { font-size: 9px; fill: #ee6f93; text-anchor: middle; }
.nav { display: flex; gap: 60px; margin-right: 100px; }
.nav-link { font-size: 32px; font-weight: 500; color: #555; }
.actions { display: flex; gap: 20px; }
.btn {
  height: 104px;
  padding: 0 60px;
  border: 2px solid var(--pink);
  border-radius: 20px;
  font-family: inherit;
  font-size: 37px;
}
.btn-plain { background: #efefef; border-color: #ddd; color: #555; }
.btn-primary { background: var(--pink); color: #fff; }

/* booking area */
.booking {
  display: flex;
  height: 584px;
  border-radius: 20px;
  overflow: hidden;
  background: #fff;
}
.map { flex: 1; min-width: 0; }
.map-svg { display: block; width: 100%; height: 100%; }
.rides {
  position: relative;
  flex: 0 0 900px;
  display: flex;
  align-items: flex-start;
  gap: 40px;
  padding: 47px 40px 0;
  background: #fff;
  box-shadow: -4px 0 24px rgba(0, 0, 0, .12);
}
.rides-title { flex: 0 0 190px; font-size: 42px; line-height: 50px; font-weight: 700; }
.ride-list { flex: 1; display: flex; flex-wrap: wrap; justify-content: center; gap: 30px; }
.ride {
  width: 276px;
  height: 277px;
  display: flex;
  flex-direction: column;
  align-items: center;
  justify-content: center;
  padding: 0;
  background: #f9f9f9;
  border: 2px solid var(--line);
  border-radius: 24px;
  color: #333;
  font-family: inherit;
}
.ride.is-selected {
  background: #fcf1f7;
  border-color: var(--pink);
  box-shadow: 0 0 0 8px rgba(207, 44, 124, .4);
}
.ride-icon { fill: var(--pink); margin-bottom: 27px; }
.ride-name { font-size: 32px; line-height: 40px; font-weight: 500; margin-bottom: 10px; }
.ride-price { font-size: 35px; line-height: 44px; font-weight: 700; color: var(--pink); }

/* map */
.vs { vector-effect: non-scaling-stroke; }
.land { fill: #f7f7f7; }
.park { fill: #daf6e4; }
.park-deep { fill: #c5eed3; }
.airfield { fill: #e2e3e8; }
.sand { fill: #f5efe3; }
.water { fill: #a1d9ec; }
.stream { fill: none; stroke: #a1d9ec; stroke-width: 3; }
.stream.wide { stroke-width: 8; }
.mesh { fill: url(#mesh); }
.mesh2 { fill: url(#mesh2); }
.grid { fill: url(#grid); }
.street { fill: none; stroke: #d8dfe8; stroke-width: 2; }
.street.thin { stroke-width: 1; }
.lanes { fill: none; stroke: #b7c6cf; stroke-width: 2; stroke-opacity: .7; }
.border { fill: none; stroke: #667; stroke-width: 2; stroke-dasharray: 4 5; }
.casing, .road { fill: none; stroke-linejoin: round; stroke-linecap: round; }
.casing { stroke: #8592bd; stroke-width: 6; }
.road { stroke: #abb8d7; stroke-width: 4; }
.i-blue { fill: #4b78c4; }
.i-red { fill: #c9635f; }
.i-num, .r-num { font-family: Roboto, "Liberation Sans", sans-serif; text-anchor: middle; }
.i-num { font-size: 18px; font-weight: 700; fill: #fff; }
.r-num { font-size: 19px; fill: #333; }
.badge { fill: #fff; stroke: #666; stroke-width: 2; }
.place {
  font-family: Roboto, "Liberation Sans", sans-serif;
  font-size: 24px;
  fill: #2d2f33;
  stroke: #fff;
  stroke-width: 5;
  stroke-linejoin: round;
  paint-order: stroke;
  text-anchor: middle;
}
.start { text-anchor: start; }
.end { text-anchor: end; }
.city { font-size: 30px; font-weight: 500; }
.metro { font-size: 40px; font-weight: 500; }
.route {
  fill: none;
  stroke: #c5237a;
  stroke-opacity: .85;
  stroke-width: 13;
  stroke-linejoin: round;
  stroke-linecap: round;
}
.pin-from { fill: #50ae73; }
.pin-to { fill: #cf2c7c; }
.pin-eye { fill: #fff; }

/* footer */
.footer {
  margin-right: 38px;
  padding: 128px 40px 104px;
  background: #fff;
  border-radius: 20px;
  box-shadow: 0 -1px 3px rgba(0, 0, 0, .05);
}
.footer-cols {
  display: grid;
  grid-template-columns: repeat(3, 1fr);
  gap: 60px;
  max-width: 2400px;
  margin: 0 auto;
  padding-bottom: 108px;
}
.footer-title {
  padding-bottom: 20px;
  margin-bottom: 20px;
  border-bottom: 2px solid var(--line);
  font-size: 37px;
  line-height: 46px;
  font-weight: 700;
  color: var(--pink);
}
.footer-list { display: grid; }
.footer-link { display: block; font-size: 30px; line-height: 56px; color: #777; }
.social { display: flex; gap: 40px; margin-top: 34px; }
.social a { display: block; }
.social svg { display: block; fill: #777; }
.copyright {
  padding-top: 68px;
  border-top: 2px solid var(--line);
  text-align: center;
  font-size: 27px;
  line-height: 36px;
  color: #777;
}
```
